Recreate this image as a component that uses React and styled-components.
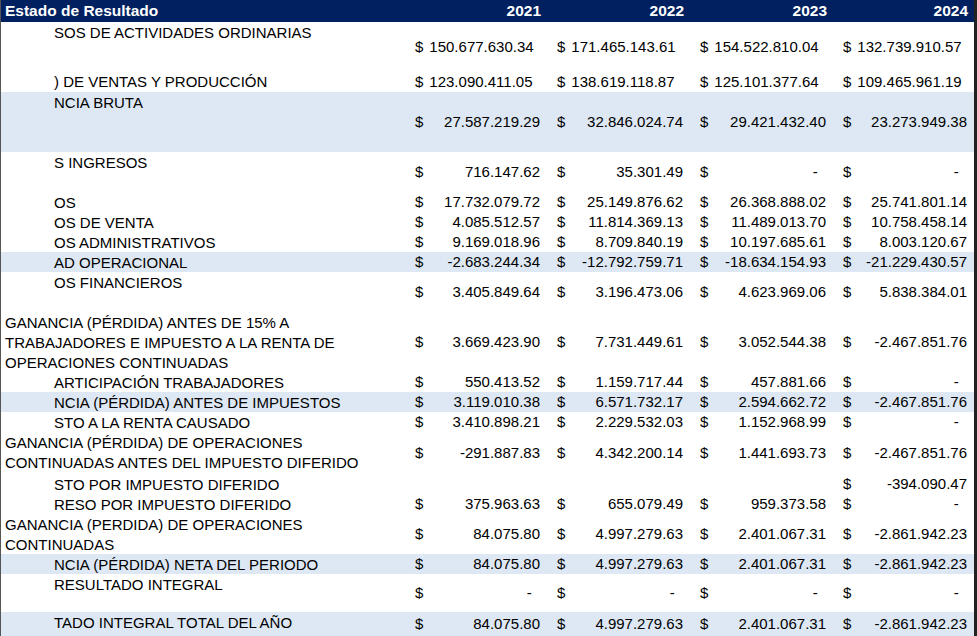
import React from "react";
import styled, { createGlobalStyle } from "styled-components";

const Global = createGlobalStyle`
  html, body { margin: 0; padding: 0; background: #fff; }
  body { font-family: "Liberation Sans", Arial, sans-serif; }
`;

const Sheet = styled.div`
  width: 977px;
  height: 636px;
  overflow: hidden;
  box-sizing: border-box;
  border-left: 1px solid #555;
  border-right: 3px solid #222;
`;

const Row = styled.div`
  display: grid;
  grid-template-columns: 404px 142px 143px 143px 141px;
  height: ${(p) => p.h}px;
  background: ${(p) => (p.shaded ? "#dde8f4" : "#fff")};
  color: #000;
  font-size: 15px;
  line-height: 20px;
  overflow: hidden;
`;

const HeaderRow = styled(Row)`
  background: #002060;
  color: #fff;
  font-weight: bold;
  height: 22px;
  line-height: 22px;
  font-size: 15.5px;
`;

const HeadLabel = styled.div`
  padding-left: 4px;
`;

const Year = styled.div`
  text-align: right;
  padding-right: 6px;
`;

const Label = styled.div`
  align-self: start;
  padding-left: ${(p) => p.indent}px;
  padding-top: 1px;
  white-space: pre-line;
  overflow: hidden;
`;

const Value = styled.div`
  align-self: center;
  display: flex;
  justify-content: space-between;
  padding: 0 7px 0 10px;
  white-space: nowrap;
`;

const rows = [
  { l: "SOS DE ACTIVIDADES ORDINARIAS", i: 53, h: 49, v: ["150.677.630.34", "171.465.143.61", "154.522.810.04", "132.739.910.57"], tight: true },
  { l: ") DE VENTAS Y PRODUCCIÓN", i: 53, h: 21, v: ["123.090.411.05", "138.619.118.87", "125.101.377.64", "109.465.961.19"], tight: true },
  { l: "NCIA BRUTA", i: 53, h: 60, s: true, v: ["27.587.219.29", "32.846.024.74", "29.421.432.40", "23.273.949.38"] },
  { l: "S INGRESOS", i: 53, h: 40, v: ["716.147.62", "35.301.49", "-", "-"] },
  { l: "OS", i: 53, h: 20, v: ["17.732.079.72", "25.149.876.62", "26.368.888.02", "25.741.801.14"] },
  { l: "OS DE VENTA", i: 53, h: 20, v: ["4.085.512.57", "11.814.369.13", "11.489.013.70", "10.758.458.14"] },
  { l: "OS ADMINISTRATIVOS", i: 53, h: 20, v: ["9.169.018.96", "8.709.840.19", "10.197.685.61", "8.003.120.67"] },
  { l: "AD OPERACIONAL", i: 53, h: 20, s: true, v: ["-2.683.244.34", "-12.792.759.71", "-18.634.154.93", "-21.229.430.57"] },
  { l: "OS FINANCIEROS", i: 53, h: 40, v: ["3.405.849.64", "3.196.473.06", "4.623.969.06", "5.838.384.01"], low: true },
  { l: "GANANCIA (PÉRDIDA) ANTES DE 15% A\nTRABAJADORES E IMPUESTO A LA RENTA DE\nOPERACIONES CONTINUADAS", i: 4, h: 60, v: ["3.669.423.90", "7.731.449.61", "3.052.544.38", "-2.467.851.76"] },
  { l: "ARTICIPACIÓN TRABAJADORES", i: 53, h: 20, v: ["550.413.52", "1.159.717.44", "457.881.66", "-"] },
  { l: "NCIA (PÉRDIDA) ANTES DE IMPUESTOS", i: 53, h: 20, s: true, v: ["3.119.010.38", "6.571.732.17", "2.594.662.72", "-2.467.851.76"] },
  { l: "STO A LA RENTA CAUSADO", i: 53, h: 20, v: ["3.410.898.21", "2.229.532.03", "1.152.968.99", "-"] },
  { l: "GANANCIA (PÉRDIDA) DE OPERACIONES\nCONTINUADAS ANTES DEL IMPUESTO DIFERIDO", i: 4, h: 42, v: ["-291.887.83", "4.342.200.14", "1.441.693.73", "-2.467.851.76"] },
  { l: "STO POR IMPUESTO DIFERIDO", i: 53, h: 20, v: [null, null, null, "-394.090.47"] },
  { l: "RESO POR IMPUESTO DIFERIDO", i: 53, h: 20, v: ["375.963.63", "655.079.49", "959.373.58", "-"] },
  { l: "GANANCIA (PERDIDA) DE OPERACIONES\nCONTINUADAS", i: 4, h: 40, v: ["84.075.80", "4.997.279.63", "2.401.067.31", "-2.861.942.23"] },
  { l: "NCIA (PÉRDIDA) NETA DEL PERIODO", i: 53, h: 20, s: true, v: ["84.075.80", "4.997.279.63", "2.401.067.31", "-2.861.942.23"] },
  { l: "RESULTADO INTEGRAL", i: 53, h: 38, v: ["-", "-", "-", "-"] },
  { l: "TADO INTEGRAL TOTAL DEL AÑO", i: 53, h: 24, s: true, v: ["84.075.80", "4.997.279.63", "2.401.067.31", "-2.861.942.23"] },
];

function Cell({ value, tight }) {
  if (value === null) return <Value />;
  return (
    <Value>
      <span>$</span>
      <span>{tight ? value : value === "-" ? "-\u00a0\u00a0" : value}</span>
    </Value>
  );
}

export default function App() {
  return (
    <>
      <Global />
      <Sheet>
        <HeaderRow>
          <HeadLabel>Estado de Resultado</HeadLabel>
          <Year>2021</Year>
          <Year>2022</Year>
          <Year>2023</Year>
          <Year>2024</Year>
        </HeaderRow>
        {rows.map((r, k) => (
          <Row key={k} h={r.h} shaded={r.s}>
            <Label indent={r.i}>{r.l}</Label>
            {r.v.map((v, j) =>
              r.tight && v ? (
                <Value key={j} style={{ justifyContent: "flex-start", gap: 6 }}>
                  <span>$</span>
                  <span>{v}</span>
                </Value>
              ) : (
                <Cell key={j} value={v} />
              )
            )}
          </Row>
        ))}
      </Sheet>
    </>
  );
}
